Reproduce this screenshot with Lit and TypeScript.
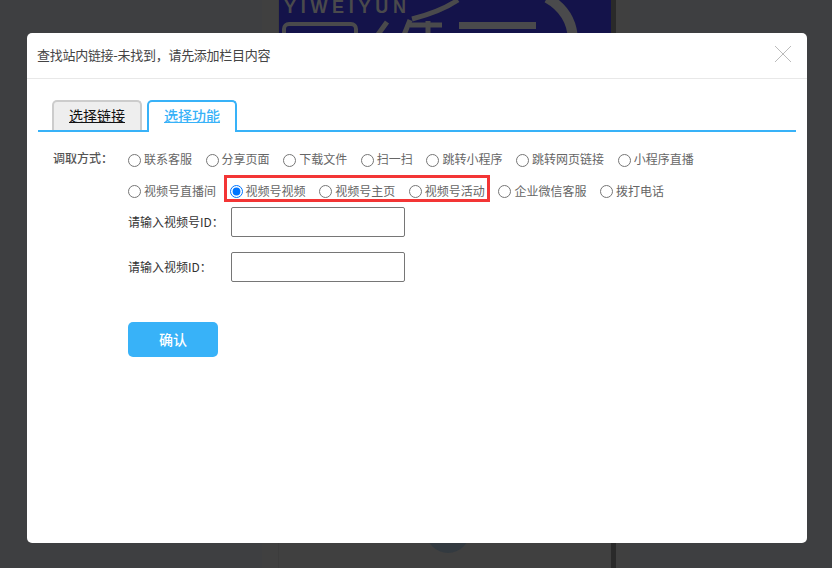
import { LitElement, html, css, svg } from "lit";
import { customElement } from "lit/decorators.js";

const row1 = ["联系客服", "分享页面", "下载文件", "扫一扫", "跳转小程序", "跳转网页链接", "小程序直播"];
const row2 = ["视频号直播间", "视频号视频", "视频号主页", "视频号活动", "企业微信客服", "拨打电话"];

@customElement("app-root")
export class AppRoot extends LitElement {
  static styles = css`
    :host {
      display: block;
      position: relative;
      width: 832px;
      height: 568px;
      overflow: hidden;
      font-family: "Noto Sans CJK SC", "Noto Sans", sans-serif;
      background: #3e3f41;
    }
    .backdrop { position: absolute; inset: 0; display: block; }
    .overlay {
      position: relative;
      box-sizing: border-box;
      height: 568px;
      padding: 33px 25px 25px 27px;
    }
    .modal {
      position: relative;
      height: 510px;
      background: #fff;
      border-radius: 5px;
    }
    .header {
      box-sizing: border-box;
      height: 46px;
      border-bottom: 1px solid #e8e8e8;
      display: flex;
      align-items: center;
      justify-content: space-between;
      padding: 0 15px 0 10px;
      font-size: 13px;
      letter-spacing: -0.28px;
      color: #444;
    }
    .header span { padding-bottom: 2px; }
    .close { display: block; width: 18px; height: 18px; margin-top: -4px; }
    .tabs {
      display: flex;
      align-items: flex-start;
      gap: 5px;
      height: 30px;
      margin: 21px 11px 0;
      padding-left: 14px;
      border-bottom: 2px solid #38b2f8;
    }
    .tab {
      box-sizing: border-box;
      width: 90px;
      height: 30px;
      border: 2px solid #ccc;
      border-bottom: 0;
      border-radius: 5px 5px 0 0;
      background: #eee;
      color: #111;
      font-size: 14px;
      line-height: 27px;
      text-align: center;
      text-decoration: underline;
    }
    .tab.active {
      height: 32px;
      border-color: #38b2f8;
      background: #fff;
      color: #38b2f8;
      font-weight: 500;
    }
    .form {
      display: grid;
      grid-template-columns: 75px 1fr;
      padding: 11px 0 0 26px;
      font-size: 12px;
    }
    .title {
      height: 32px;
      line-height: 30px;
      color: #555;
      font-weight: 500;
    }
    .rows { display: flex; flex-direction: column; }
    .row {
      display: flex;
      align-items: center;
      gap: 13.6px;
      height: 32px;
      color: #666;
    }
    .opt { display: flex; align-items: center; white-space: nowrap; }
    .opt span { padding-bottom: 2px; }
    .opt input { margin: 0 3px 0 0; width: 13px; height: 13px; }
    .row.first input { margin-top: 2px; }
    .field { display: flex; align-items: center; height: 30px; margin-bottom: 15px; color: #333; }
    .field label { width: 103px; padding-bottom: 2px; }
    .field input {
      box-sizing: border-box;
      width: 174px;
      height: 30px;
      border: 1px solid #767676;
      border-radius: 2px;
      background: #fff;
      padding: 0 2px;
    }
    .confirm {
      box-sizing: border-box;
      width: 90px;
      height: 35px;
      margin-top: 25px;
      border: 0;
      border-radius: 5px;
      background: #38b2f8;
      color: #fff;
      font: inherit;
      font-size: 14px;
      font-weight: 500;
      padding: 0 0 2px;
    }
    .mark {
      position: absolute;
      left: 197px;
      top: 142px;
      width: 266px;
      height: 27px;
      box-sizing: border-box;
      border: 3px solid #f33535;
      pointer-events: none;
    }
  `;

  private backdrop() {
    return svg`
      <svg class="backdrop" width="832" height="568" viewBox="0 0 832 568">
        <rect x="262" y="0" width="368" height="568" fill="#404040"/>
        <rect x="278" y="0" width="1" height="568" fill="#3c3c3c"/>
        <rect x="611" y="0" width="5" height="568" fill="#2a2a2a"/>
        <rect x="279" y="0" width="332" height="40" fill="#14134a"/>
        <text x="284" y="13" font-family="Liberation Sans" font-weight="700" font-size="18" letter-spacing="4.7" fill="#4a4a4c">YIWEIYUN</text>
        <rect x="284" y="24" width="72" height="24" rx="5" fill="none" stroke="#4a4a4c" stroke-width="4"/>
        <path d="M387 22 L374 40 M410 20 L402 40 M428 21 V40 M410 25 H442 M412 19 Q440 12 458 0" fill="none" stroke="#4a4a4c" stroke-width="5"/>
        <rect x="459" y="22" width="77" height="7" fill="#4a4a4c"/>
        <path d="M547 -2 Q572 12 573 40" fill="none" stroke="#4a4a4c" stroke-width="10"/>
        <circle cx="448" cy="531" r="22" fill="#333a40"/>
      </svg>
    `;
  }

  private option(text: string, checked = false) {
    return html`<label class="opt"><input type="radio" name="kind" ?checked=${checked} /><span>${text}</span></label>`;
  }

  render() {
    return html`
      ${this.backdrop()}
      <div class="overlay">
        <div class="modal">
          <div class="header">
            <span>查找站内链接-未找到，请先添加栏目内容</span>
            <svg class="close" viewBox="0 0 18 18" fill="none" stroke="#bbb" stroke-width="1">
              <path d="M1 1 L17 17 M17 1 L1 17"/>
            </svg>
          </div>
          <div class="tabs">
            <div class="tab">选择链接</div>
            <div class="tab active">选择功能</div>
          </div>
          <div class="form">
            <div class="title">调取方式：</div>
            <div class="rows">
              <div class="row first">${row1.map((t) => this.option(t))}</div>
              <div class="row">${row2.map((t) => this.option(t, t === "视频号视频"))}</div>
              <div class="field"><label>请输入视频号ID：</label><input type="text" /></div>
              <div class="field"><label>请输入视频ID：</label><input type="text" /></div>
              <div><button class="confirm">确认</button></div>
            </div>
          </div>
          <div class="mark"></div>
        </div>
      </div>
    `;
  }
}
